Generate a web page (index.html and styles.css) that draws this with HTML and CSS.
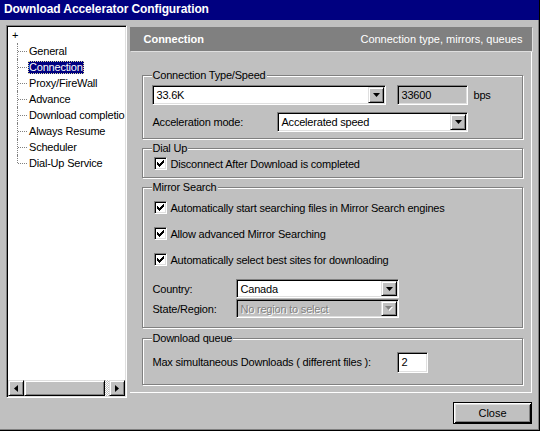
FILE: index.html
```html
<!DOCTYPE html>
<html>
<head>
<meta charset="utf-8">
<link rel="stylesheet" href="styles.css">
</head>
<body>
<div class="window">
  <div class="titlebar">Download Accelerator Configuration</div>
  <div class="body">
    <div class="main">
      <div class="tree">
        <div class="tree-view">
          <div class="root">+</div>
          <ul class="items">
            <li><span>General</span></li>
            <li class="sel"><span>Connection</span></li>
            <li><span>Proxy/FireWall</span></li>
            <li><span>Advance</span></li>
            <li><span>Download completio</span></li>
            <li><span>Always Resume</span></li>
            <li><span>Scheduler</span></li>
            <li><span>Dial-Up Service</span></li>
          </ul>
        </div>
        <div class="hscroll">
          <div class="sb-btn"><svg width="4" height="7" viewBox="0 0 4 7"><path d="M0 3.5L4 0V7Z" fill="#000"/></svg></div>
          <div class="sb-thumb"></div>
          <div class="sb-track"></div>
          <div class="sb-btn"><svg width="4" height="7" viewBox="0 0 4 7"><path d="M4 3.5L0 0V7Z" fill="#000"/></svg></div>
        </div>
      </div>
      <div class="right">
        <div class="header"><span class="header-title">Connection</span><span class="header-desc">Connection type, mirrors, queues</span></div>
        <div class="panel">
          <div class="group g-conn">
            <span class="group-title">Connection Type/Speed</span>
            <div class="row r-speed">
              <div class="combo w-speed"><span class="combo-text">33.6K</span><span class="combo-btn"><svg width="7" height="4" viewBox="0 0 7 4"><path d="M0 0H7L3.5 4Z" fill="#000"/></svg></span></div>
              <div class="textbox readonly w-bps">33600</div>
              <span class="unit">bps</span>
            </div>
            <div class="row r-accel">
              <span class="label l-accel">Acceleration mode:</span>
              <div class="combo w-accel"><span class="combo-text">Accelerated speed</span><span class="combo-btn"><svg width="7" height="4" viewBox="0 0 7 4"><path d="M0 0H7L3.5 4Z" fill="#000"/></svg></span></div>
            </div>
          </div>

          <div class="group g-dial">
            <span class="group-title">Dial Up</span>
            <div class="check-row r-dial">
              <span class="checkbox"><svg width="7" height="7" viewBox="0 0 7 7" shape-rendering="crispEdges"><path d="M6 0h1v1h-1zM5 1h2v1h-2zM0 2h1v1h-1zM4 2h3v1h-3zM0 3h2v1h-2zM3 3h3v1h-3zM0 4h5v1h-5zM1 5h3v1h-3zM2 6h1v1h-1z" fill="#000"/></svg></span>
              <span>Disconnect After Download is completed</span>
            </div>
          </div>

          <div class="group g-mirror">
            <span class="group-title">Mirror Search</span>
            <div class="check-row r-m1">
              <span class="checkbox"><svg width="7" height="7" viewBox="0 0 7 7" shape-rendering="crispEdges"><path d="M6 0h1v1h-1zM5 1h2v1h-2zM0 2h1v1h-1zM4 2h3v1h-3zM0 3h2v1h-2zM3 3h3v1h-3zM0 4h5v1h-5zM1 5h3v1h-3zM2 6h1v1h-1z" fill="#000"/></svg></span>
              <span>Automatically start searching files in Mirror Search engines</span>
            </div>
            <div class="check-row r-m2">
              <span class="checkbox"><svg width="7" height="7" viewBox="0 0 7 7" shape-rendering="crispEdges"><path d="M6 0h1v1h-1zM5 1h2v1h-2zM0 2h1v1h-1zM4 2h3v1h-3zM0 3h2v1h-2zM3 3h3v1h-3zM0 4h5v1h-5zM1 5h3v1h-3zM2 6h1v1h-1z" fill="#000"/></svg></span>
              <span>Allow advanced Mirror Searching</span>
            </div>
            <div class="check-row r-m2">
              <span class="checkbox"><svg width="7" height="7" viewBox="0 0 7 7" shape-rendering="crispEdges"><path d="M6 0h1v1h-1zM5 1h2v1h-2zM0 2h1v1h-1zM4 2h3v1h-3zM0 3h2v1h-2zM3 3h3v1h-3zM0 4h5v1h-5zM1 5h3v1h-3zM2 6h1v1h-1z" fill="#000"/></svg></span>
              <span>Automatically select best sites for downloading</span>
            </div>
            <div class="row r-country">
              <span class="label l-country">Country:</span>
              <div class="combo w-country"><span class="combo-text">Canada</span><span class="combo-btn"><svg width="7" height="4" viewBox="0 0 7 4"><path d="M0 0H7L3.5 4Z" fill="#000"/></svg></span></div>
            </div>
            <div class="row r-state">
              <span class="label l-country">State/Region:</span>
              <div class="combo w-country disabled"><span class="combo-text">No region to select</span><span class="combo-btn"><svg width="8" height="5" viewBox="0 0 8 5"><path d="M1 1H8L4.5 5Z" fill="#fff"/><path d="M0 0H7L3.5 4Z" fill="#808080"/></svg></span></div>
            </div>
          </div>

          <div class="group g-queue">
            <span class="group-title">Download queue</span>
            <div class="row r-queue">
              <span class="label l-queue">Max simultaneous Downloads ( different files ):</span>
              <div class="textbox w-queue">2</div>
            </div>
          </div>
        </div>
      </div>
    </div>
    <div class="footer"><button class="btn">Close</button></div>
  </div>
</div>
</body>
</html>
```

FILE: styles.css
```css
* { box-sizing: border-box; }
body {
  margin: 0;
  font-family: "Liberation Sans", Arial, sans-serif;
  font-size: 11px;
  letter-spacing: -0.2px;
  color: #000;
  background: #c0c0c0;
}
.window {
  width: 540px;
  height: 431px;
  background: #c0c0c0;
  border-right: 1px solid #000;
  border-bottom: 1px solid #000;
  box-shadow: inset -1px -1px 0 #808080;
  display: flex;
  flex-direction: column;
  overflow: hidden;
}
.titlebar {
  height: 20px;
  background: #000080;
  color: #fff;
  font-weight: bold;
  font-size: 12px;
  letter-spacing: -0.1px;
  padding-left: 4px;
  line-height: 19px;
  white-space: nowrap;
}
.body {
  flex: 1;
  padding: 5px 7px 0 6px;
  display: flex;
  flex-direction: column;
}
.main {
  display: flex;
  gap: 3px;
}

/* tree */
.tree {
  width: 122px;
  height: 373px;
  background: #fff;
  border: 1px solid;
  border-color: #808080 #fff #fff #808080;
  padding: 1px;
  box-shadow: inset 1px 1px 0 #000, inset -1px -1px 0 #dfdfdf;
  display: flex;
  flex-direction: column;
}
.tree-view {
  flex: 1;
  overflow: hidden;
  white-space: nowrap;
}
.root {
  height: 16px;
  line-height: 16px;
  padding-left: 4px;
}
.items {
  list-style: none;
  margin: 0;
  padding: 0 0 0 9px;
}
.items li {
  position: relative;
  height: 16px;
  padding-left: 11px;
  display: flex;
  align-items: center;
}
.items li::before {
  content: "";
  position: absolute;
  left: 0;
  top: 0;
  bottom: 0;
  border-left: 1px dotted #808080;
}
.items li:last-child::before { bottom: 8px; }
.items li::after {
  content: "";
  position: absolute;
  left: 1px;
  top: 8px;
  width: 9px;
  border-top: 1px dotted #808080;
}
.items li span {
  padding: 0 1px;
  line-height: 13px;
  height: 13px;
}
.items li.sel span {
  background: #000080;
  color: #fff;
  outline: 1px dotted #e0e0a0;
  outline-offset: -1px;
}
.hscroll {
  height: 16px;
  display: flex;
}
.sb-btn, .sb-thumb {
  background: #c0c0c0;
  border: 1px solid;
  border-color: #dfdfdf #000 #000 #dfdfdf;
  box-shadow: inset 1px 1px 0 #fff, inset -1px -1px 0 #808080;
}
.sb-btn {
  width: 16px;
  display: flex;
  align-items: center;
  justify-content: center;
}
.sb-thumb { width: 81px; }
.sb-track {
  flex: 1;
  background: repeating-conic-gradient(#fff 0 25%, #c0c0c0 0 50%) 0 0 / 2px 2px;
}

/* right */
.right {
  width: 403px;
  margin-top: 2px;
  display: flex;
  flex-direction: column;
}
.header {
  height: 24px;
  width: 402px;
  background: #808080;
  color: #fff;
  letter-spacing: 0;
  display: flex;
  align-items: center;
  justify-content: space-between;
  padding: 0 10px 1px 13px;
  box-shadow: 1px 1px 0 #dfdfdf;
}
.header-title { font-weight: bold; }
.panel {
  margin-top: 1px;
  height: 341px;
  border-right: 1px solid #fff;
  border-bottom: 1px solid #fff;
  padding: 23px 8px 0 12px;
}

/* groups */
.group {
  border: 1px solid #808080;
  box-shadow: inset 1px 1px 0 #fff, 1px 1px 0 #fff;
  padding: 0 8px 0 9px;
  display: flex;
  flex-direction: column;
}
.group-title {
  display: block;
  align-self: flex-start;
  margin: -7px 0 0 0;
  padding: 0 1px 0 0;
  background: #c0c0c0;
  line-height: 13px;
  height: 13px;
}
.g-conn { height: 64px; }
.g-dial { height: 30px; margin-top: 9px; }
.g-mirror { height: 141px; margin-top: 9px; }
.g-queue { height: 47px; margin-top: 10px; }

.row {
  display: flex;
  align-items: center;
  height: 20px;
}
.r-speed { margin-top: 3px; }
.r-accel { margin-top: 7px; }
.r-country { margin-top: 13px; height: 19px; }
.r-state { margin-top: 1px; height: 19px; }
.r-queue { margin-top: 7px; }

.label { white-space: nowrap; }
.l-accel { width: 125px; }
.l-country { width: 84px; }
.l-queue { width: 245px; }
.unit { margin-left: 5px; }

.check-row {
  display: flex;
  align-items: center;
  height: 13px;
  margin-left: 2px;
  white-space: nowrap;
}
.r-dial { margin-top: 2px; }
.r-m1 { margin-top: 7px; }
.r-m2 { margin-top: 13px; }
.checkbox {
  width: 13px;
  height: 13px;
  margin-right: 3px;
  background: #fff;
  border: 1px solid;
  border-color: #808080 #fff #fff #808080;
  box-shadow: inset 1px 1px 0 #000, inset -1px -1px 0 #dfdfdf;
  display: flex;
  align-items: center;
  justify-content: center;
  flex: none;
}

/* combos and textboxes */
.combo, .textbox {
  height: 100%;
  background: #fff;
  border: 1px solid;
  border-color: #808080 #fff #fff #808080;
  padding: 1px;
  box-shadow: inset 1px 1px 0 #000, inset -1px -1px 0 #dfdfdf;
  display: flex;
  align-items: stretch;
  flex: none;
}
.combo-text {
  flex: 1;
  padding-left: 2px;
  display: flex;
  align-items: center;
  white-space: nowrap;
  overflow: hidden;
}
.combo-btn {
  width: 16px;
  background: #c0c0c0;
  border: 1px solid;
  border-color: #dfdfdf #000 #000 #dfdfdf;
  box-shadow: inset 1px 1px 0 #fff, inset -1px -1px 0 #808080;
  display: flex;
  align-items: center;
  justify-content: center;
}
.textbox {
  align-items: center;
  padding-left: 3px;
}
.textbox.readonly { background: #c0c0c0; }
.combo.disabled { background: #c0c0c0; }
.combo.disabled .combo-text {
  color: #808080;
  text-shadow: 1px 1px 0 #fff;
}
.w-speed { width: 234px; }
.w-bps { width: 71px; margin-left: 11px; }
.w-accel { width: 191px; }
.w-country { width: 163px; }
.w-queue { width: 31px; height: 21px; }

/* footer */
.footer {
  display: flex;
  justify-content: flex-end;
  margin-top: 4px;
}
.btn {
  width: 79px;
  height: 22px;
  font: inherit;
  letter-spacing: 0;
  color: #000;
  background: #c0c0c0;
  border: 1px solid #000;
  padding: 0;
  box-shadow: inset 1px 1px 0 #fff, inset -1px -1px 0 #000, inset 2px 2px 0 #dfdfdf, inset -2px -2px 0 #808080;
}
```
